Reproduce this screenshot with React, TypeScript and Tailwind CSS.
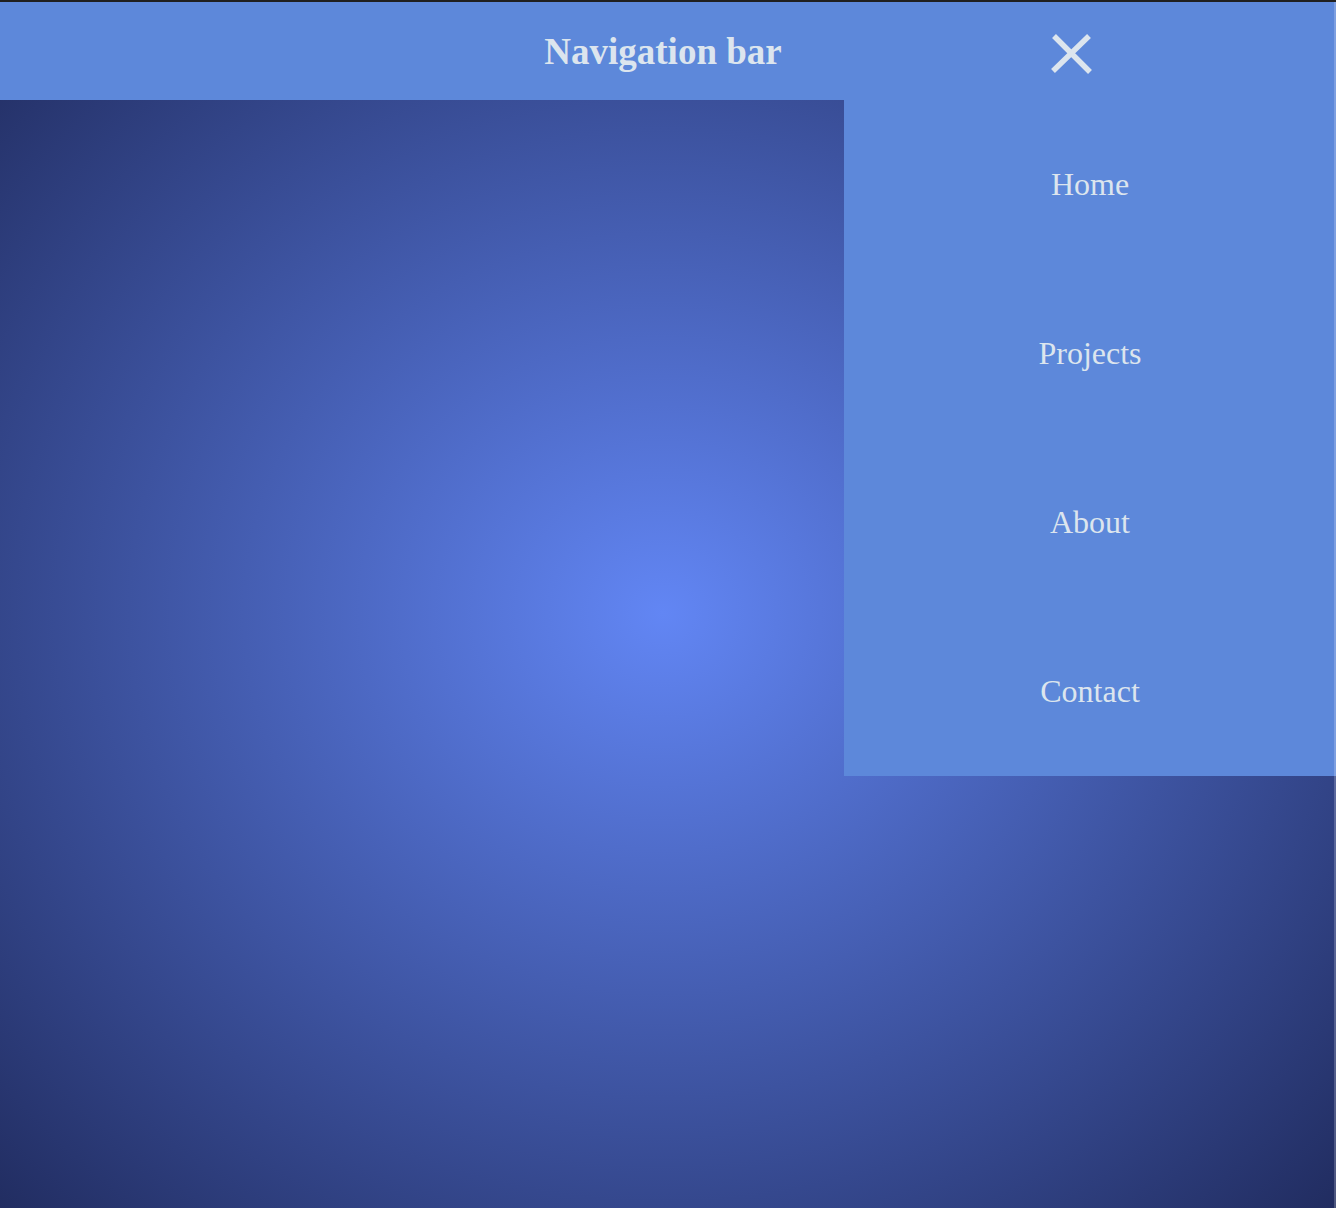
const links = ["Home", "Projects", "About", "Contact"];

export default function App() {
  return (
    <div className="relative min-h-screen border-t-2 border-[#202020] bg-[radial-gradient(farthest-corner_at_49.6%_50.7%,#6286f4,#202b5e)] font-['Liberation_Serif',serif] text-[#dce5ee]">
      <header className="grid h-[98px] grid-cols-[1fr_auto_1fr] items-center bg-[#5d88da] pt-[2px] pr-[10px]">
        <h1 className="col-start-2 text-[37px] font-bold">Navigation bar</h1>
        <button type="button" aria-label="Close menu" className="mt-1 ml-9 justify-self-center">
          <svg width="44" height="44" viewBox="0 0 44 44" fill="none" stroke="currentColor" strokeWidth="5.5">
            <path d="M4 4 40 40M39 4 3 39" />
          </svg>
        </button>
      </header>
      <nav aria-label="Main" className="ml-auto w-[492px] max-w-full bg-[#5d88da]">
        <ul>
          {links.map((label) => (
            <li key={label}>
              <a href="#" className="flex h-[169px] items-center justify-center pb-[2px] text-[32px]">
                {label}
              </a>
            </li>
          ))}
        </ul>
      </nav>
      <div className="absolute inset-y-0 right-0 w-[2px] bg-white/20" />
    </div>
  );
}
